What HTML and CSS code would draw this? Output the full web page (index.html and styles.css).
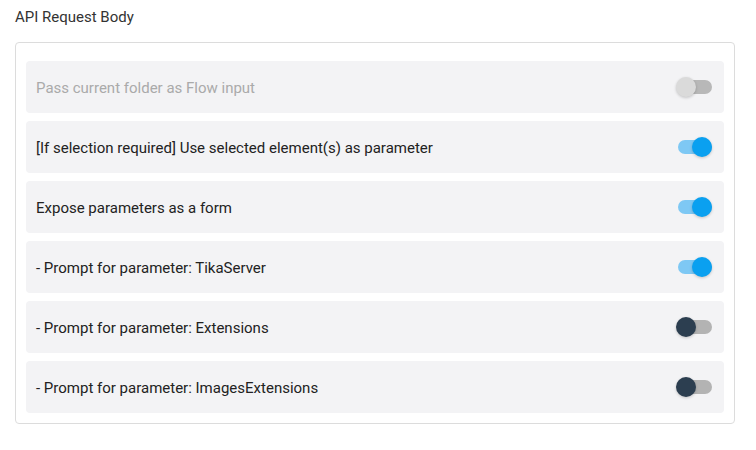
FILE: index.html
```html
<!DOCTYPE html>
<html>
<head>
<meta charset="utf-8">
<link rel="stylesheet" href="styles.css">
</head>
<body>
<div class="page">
  <div class="title">API Request Body</div>
  <div class="card">
    <div class="row disabled"><span class="label">Pass current folder as Flow input</span><span class="switch off-disabled"><span class="track"></span><span class="knob"></span></span></div>
    <div class="row"><span class="label">[If selection required] Use selected element(s) as parameter</span><span class="switch on"><span class="track"></span><span class="knob"></span></span></div>
    <div class="row"><span class="label">Expose parameters as a form</span><span class="switch on"><span class="track"></span><span class="knob"></span></span></div>
    <div class="row"><span class="label">- Prompt for parameter: TikaServer</span><span class="switch on"><span class="track"></span><span class="knob"></span></span></div>
    <div class="row"><span class="label">- Prompt for parameter: Extensions</span><span class="switch off"><span class="track"></span><span class="knob"></span></span></div>
    <div class="row"><span class="label">- Prompt for parameter: ImagesExtensions</span><span class="switch off"><span class="track"></span><span class="knob"></span></span></div>
  </div>
</div>
</body>
</html>
```
FILE: styles.css
```css
* { box-sizing: border-box; }
html, body { margin: 0; padding: 0; background: #fff; }
body { font-family: Roboto, "Noto Sans", sans-serif; color: #222; }
.page { padding: 8px 21px 0 15px; }
.title { font-size: 15px; line-height: 18px; color: #333; margin-bottom: 16px; }
.card {
  border: 1px solid #dcdcdc;
  border-radius: 4px;
  padding: 18px 10px 10px 10px;
  display: flex;
  flex-direction: column;
  gap: 8px;
}
.row {
  height: 52px;
  background: #f3f3f5;
  border-radius: 4px;
  display: flex;
  align-items: center;
  justify-content: space-between;
  padding: 0 12px 0 10px;
}
.label { font-size: 15px; line-height: 20px; padding-top: 1px; color: #222; }
.row.disabled .label { color: #aaa; }
.switch { position: relative; width: 36px; height: 20px; display: block; }
.track {
  position: absolute; left: 2px; top: 3px; width: 34px; height: 14px;
  border-radius: 7px; background: #b3b3b3;
}
.knob {
  position: absolute; top: 0; left: 0; width: 20px; height: 20px; border-radius: 50%;
  box-shadow: 0 1px 3px rgba(0,0,0,0.2);
}
.off-disabled .track { background: #b8b8b8; }
.off-disabled .knob { background: #dadada; }
.off .knob { background: #2c3e50; }
.on .track { background: #7ec8f4; }
.on .knob { left: 16px; background: #0aa0f0; }
```
